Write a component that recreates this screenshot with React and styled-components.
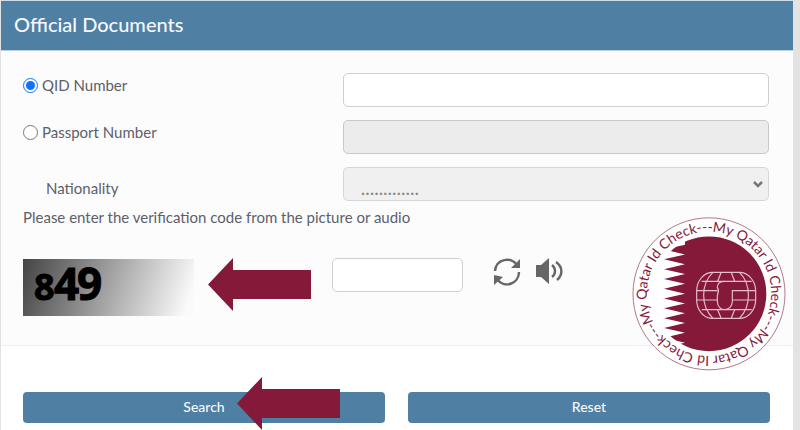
import React, { useState } from "react";
import styled, { createGlobalStyle } from "styled-components";

const MAROON = "#84193a";
const BLUE = "#507fa4";

const GlobalStyle = createGlobalStyle`
  * { box-sizing: border-box; }
  body {
    margin: 0;
    background: #e3e3e3;
    color: #5c6069;
    font: 15px/20px Lato, "Open Sans", sans-serif;
  }
`;

const Panel = styled.main`
  position: relative;
  margin: 0 7px 0 1px;
  background: #fff;
  border-top: 1px solid #cfdde8;
`;

const Header = styled.header`
  padding: 11px 13px 13px;
  background: ${BLUE};
  border-bottom: 1px solid #b9d0e0;
`;

const Title = styled.h1`
  margin: 0;
  color: #f4f9fd;
  font-size: 20px;
  line-height: 25px;
  font-weight: 500;
`;

const Body = styled.section`
  padding: 22px 24px 29px 22px;
  background: #fcfcfc;
  border-bottom: 1px solid #efefef;
`;

const Fields = styled.div`
  display: grid;
  grid-template-columns: 3fr 4fr;
  row-gap: 13px;
`;

const Choice = styled.label`
  display: flex;
  align-items: center;
  align-self: start;
  gap: 4px;
  height: 24px;
`;

const Radio = styled.input`
  width: 15px;
  height: 15px;
  margin: 0;
  accent-color: #0a75ff;
`;

const NestedLabel = styled.label`
  align-self: end;
  padding: 0 0 3px 23px;
`;

const TextBox = styled.input`
  width: ${(p) => p.$width || "100%"};
  height: 34px;
  padding: 6px 12px;
  border: 1px solid #cfcfcf;
  border-radius: 5px;
  background: #fff;
  color: inherit;
  font: inherit;
  &:disabled { background: #ececec; border-color: #c8c8c8; }
`;

const SelectWrap = styled.div`
  display: grid;
  align-items: center;
  > * { grid-area: 1 / 1; }
`;

const Select = styled.select`
  appearance: none;
  width: 100%;
  height: 34px;
  padding: 7px 17px 0;
  border: 1px solid #d6d6d6;
  border-radius: 5px;
  background: #f0f0f0;
  color: #888;
  font: 19px/20px Lato, sans-serif;
  opacity: 1;
`;

const Chevron = styled.svg`
  justify-self: end;
  width: 12px;
  height: 9px;
  margin-right: 5px;
  pointer-events: none;
`;

const Hint = styled.label`
  display: block;
  margin-top: 6px;
`;

const Verification = styled.div`
  display: flex;
  align-items: flex-start;
  margin-top: 31px;
`;

const Captcha = styled.svg`
  width: 171px;
  height: 57px;
  margin: 1px 14px 0 0;
`;

const ArrowShape = styled.svg`
  display: block;
  flex: none;
  width: 103px;
  height: 53px;
  fill: ${MAROON};
`;

const CodeBox = styled(TextBox)`
  margin-left: 21px;
`;

const IconButton = styled.button`
  width: 30px;
  height: 30px;
  margin-left: ${(p) => p.$gap};
  padding: 0;
  border: 0;
  background: none;
  color: #666;
  svg { display: block; width: 30px; height: 30px; }
`;

const Footer = styled.footer`
  display: grid;
  grid-template-columns: 1fr 1fr;
  gap: 23px;
  padding: 46px 23px 7px 22px;
`;

const Action = styled.button`
  width: 100%;
  height: 31px;
  padding: 0 0 2px;
  border: 0;
  border-radius: 4px;
  background: ${BLUE};
  color: #f4f9fd;
  font: 500 14px/20px Lato, sans-serif;
`;

const ActionSlot = styled.div`
  position: relative;
`;

const Pointer = styled.div`
  position: absolute;
  top: -15px;
  left: calc(50% + 33px);
`;

const Seal = styled.svg`
  position: absolute;
  top: 216px;
  right: 7px;
  width: 154px;
  height: 154px;
`;

function Arrow() {
  return (
    <ArrowShape viewBox="0 0 103 53" aria-hidden="true">
      <path d="M0 26.5 25 0V12H103V41H25V53Z" />
    </ArrowShape>
  );
}

const teeth = Array.from({ length: 11 }, (_, i) => {
  const y = 118 + i * 29.4;
  return `L132 ${y + 14.7} L195 ${y + 29.4}`;
}).join(" ");

function Badge() {
  return (
    <Seal viewBox="36 35 462 462" role="img" aria-label="My Qatar Id Check">
      <defs>
        <path id="ring" d="M267 79A186.500 186.500 0 1 1 266.900 79" />
        <clipPath id="disc"><circle cx="267" cy="265.500" r="172" /></clipPath>
      </defs>
      <circle cx="267" cy="265.500" r="228" fill="#fff" stroke="#b0788b" strokeWidth="3" />
      <path d={`M195 60V118${teeth}V490H460V60Z`} fill={MAROON} clipPath="url(#disc)" />
      {[3, 123, 243].map((turn) => (
        <text
          key={turn}
          transform={`rotate(${turn} 267 265.500)`}
          fill={MAROON}
          fontFamily="Lato, sans-serif"
          fontSize="42"
        >
          <textPath href="#ring">My Qatar Id Check---</textPath>
        </text>
      ))}
      <g transform="translate(210 180)" fill="none" stroke="#e6bdcb" strokeWidth="3.500">
        <path d="M65 21H151C178 23 197 50 197 76V104C197 130 178 158 151 159H65C38 158 20 130 20 104V76C20 50 38 23 65 21Z" />
        <path d="M35 48H185M20 76H82M20 104H82M127 104H197M35 133H185" />
        <path d="M105 48C87 48 82 58 82 66C90 78 82 85 82 92V108C82 125 94 133 104 133C116 133 127 123 127 108V76H197" />
        <path d="M68 22C32 57 32 123 68 158M149 22C184 57 184 123 149 158M93 22 83 48M124 22 134 48M83 133 93 158M134 133 124 158" />
      </g>
    </Seal>
  );
}

export default function App() {
  const [kind, setKind] = useState("qid");
  return (
    <>
      <GlobalStyle />
      <Panel>
        <Header>
          <Title>Official Documents</Title>
        </Header>
        <Body>
          <Fields>
            <Choice>
              <Radio type="radio" name="kind" checked={kind === "qid"} onChange={() => setKind("qid")} />
              QID Number
            </Choice>
            <TextBox aria-label="QID Number" disabled={kind !== "qid"} />
            <Choice>
              <Radio type="radio" name="kind" checked={kind === "passport"} onChange={() => setKind("passport")} />
              Passport Number
            </Choice>
            <TextBox aria-label="Passport Number" disabled={kind !== "passport"} />
            <NestedLabel htmlFor="nationality">Nationality</NestedLabel>
            <SelectWrap>
              <Select id="nationality" disabled={kind !== "passport"}>
                <option>.............</option>
              </Select>
              <Chevron viewBox="0 0 12 9" aria-hidden="true">
                <path d="M2 2 6 6 10 2" fill="none" stroke="#777" strokeWidth="2.500" />
              </Chevron>
            </SelectWrap>
          </Fields>
          <Hint htmlFor="code">Please enter the verification code from the picture or audio</Hint>
          <Verification>
            <Captcha viewBox="0 0 171 57" role="img" aria-label="Verification code">
              <defs>
                <linearGradient id="shade" gradientUnits="userSpaceOnUse" x1="0" y1="0" x2="162" y2="54">
                  <stop offset="0" stopColor="#444" />
                  <stop offset="1" stopColor="#fafafa" />
                </linearGradient>
              </defs>
              <rect width="171" height="57" fill="url(#shade)" />
              <text y="41" fontFamily="Open Sans, sans-serif" fontWeight="700" fontSize="44" stroke="#000">
                <tspan x="11" fontSize="36">8</tspan>
                <tspan x="31">4</tspan>
                <tspan x="54">9</tspan>
              </text>
            </Captcha>
            <Arrow />
            <CodeBox id="code" $width="131px" />
            <IconButton type="button" aria-label="Refresh" $gap="29px">
              <svg viewBox="0 0 30 30" fill="none" stroke="currentColor" strokeWidth="2.400">
                <path d="M3 13C4 1 19-2 25 7M27 14C27 26 12 31 5 21" />
                <path d="M28 1V10H19ZM2 27V17L11 19Z" fill="currentColor" stroke="none" />
              </svg>
            </IconButton>
            <IconButton type="button" aria-label="Play audio" $gap="12px">
              <svg viewBox="0 0 30 30" fill="none" stroke="currentColor" strokeWidth="2.400">
                <path d="M2 7H7L15 0V26L7 19H2Z" fill="currentColor" stroke="none" />
                <path d="M18 7C22 10 22 16 18 19M22 4C29 9 29 17 23 22" />
              </svg>
            </IconButton>
          </Verification>
        </Body>
        <Footer>
          <ActionSlot>
            <Action type="submit">Search</Action>
            <Pointer><Arrow /></Pointer>
          </ActionSlot>
          <ActionSlot>
            <Action type="reset">Reset</Action>
          </ActionSlot>
        </Footer>
        <Badge />
      </Panel>
    </>
  );
}
